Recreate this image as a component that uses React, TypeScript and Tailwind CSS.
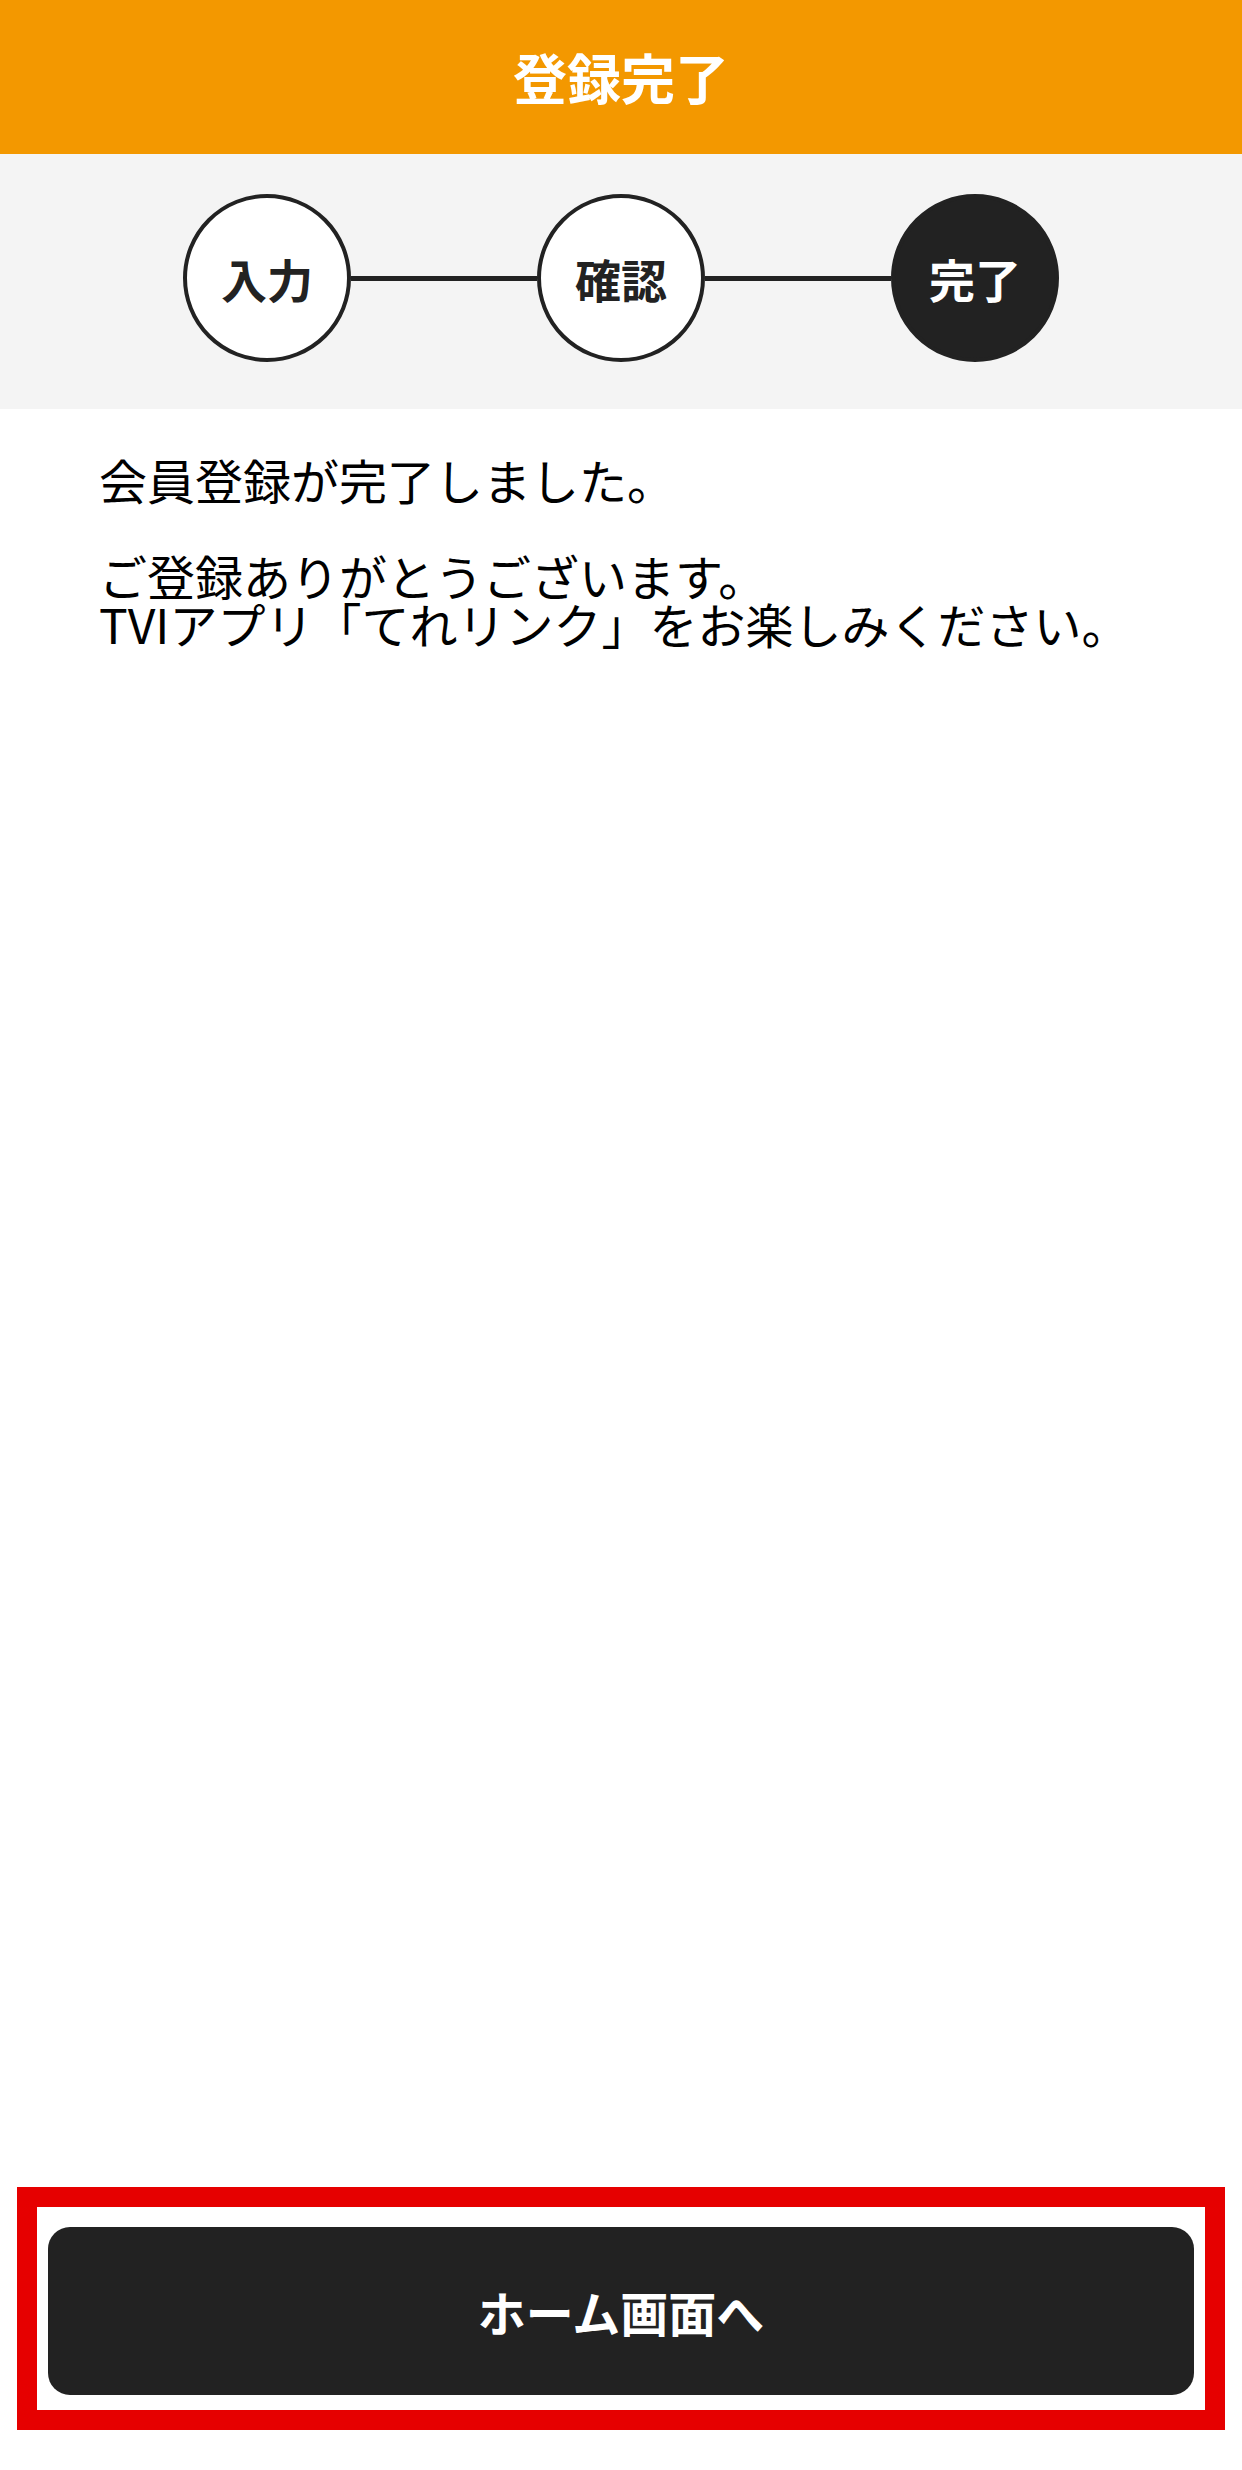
import React from 'react';

const steps = [
  { label: '入力', active: false },
  { label: '確認', active: false },
  { label: '完了', active: true },
];

const App = () => {
  return (
    <div
      className="h-[2470px] w-full flex flex-col bg-white text-[#222]"
      style={{ fontFamily: '"Noto Sans CJK JP", "Noto Sans", sans-serif' }}
    >
      {/* Header */}
      <header className="h-[154px] bg-[#f39800] flex items-center justify-center">
        <h1 className="text-[54px] font-bold text-white leading-none">登録完了</h1>
      </header>

      {/* Stepper */}
      <div className="bg-[#f4f4f4] h-[255px] flex items-center justify-center pb-[7px]">
        {steps.map((step, i) => (
          <React.Fragment key={step.label}>
            {i > 0 && <div className="w-[186px] h-[5px] bg-[#222]" />}
            <div
              className={
                step.active
                  ? 'w-[168px] h-[168px] rounded-full border-[4px] border-[#222] bg-[#222] text-white flex items-center justify-center'
                  : 'w-[168px] h-[168px] rounded-full border-[4px] border-[#222] bg-white text-[#222] flex items-center justify-center'
              }
            >
              <span className="text-[46px] font-bold leading-none">{step.label}</span>
            </div>
          </React.Fragment>
        ))}
      </div>

      {/* Message */}
      <div className="pt-[46px] pl-[99px] pr-[40px] text-[48px] leading-[48px] text-black">
        <p>会員登録が完了しました。</p>
        <p>&nbsp;</p>
        <p>ご登録ありがとうございます。</p>
        <p>TVIアプリ「てれリンク」をお楽しみください。</p>
      </div>

      {/* Bottom button */}
      <div className="mt-auto mx-[17px] mb-[40px] border-[20px] border-[#e60000] px-[11px] pt-[20px] pb-[15px]">
        <button className="w-full h-[168px] rounded-[22px] bg-[#222] text-white text-[48px] font-bold leading-none flex items-center justify-center">
          ホーム画面へ
        </button>
      </div>
    </div>
  );
};

export default App;
